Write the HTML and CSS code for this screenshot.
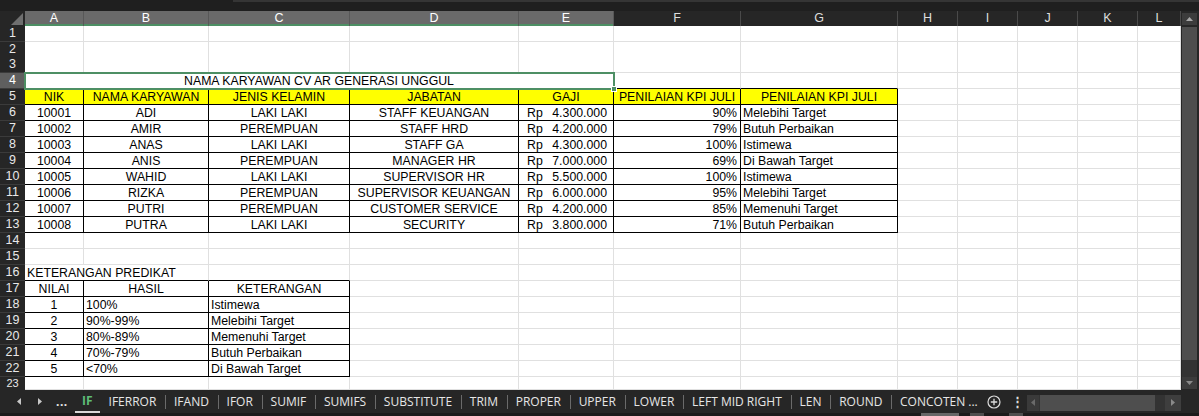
FILE: index.html
```html
<!DOCTYPE html>
<html>
<head>
<meta charset="utf-8">
<link rel="stylesheet" href="styles.css">
</head>
<body>
<div class="app">
  <div class="topstrip"><div class="fbar-edge"></div></div>
  <div class="main">
    <div class="sheet">
      <div class="r hdr">
        <div class="corner"><svg width="12" height="12" viewBox="0 0 12 12"><polygon points="12,0 12,12 0,12" fill="#6f6f6f"/></svg></div>
        <div class="ch sel">A</div><div class="ch sel">B</div><div class="ch sel">C</div><div class="ch sel">D</div><div class="ch sel">E</div>
        <div class="ch">F</div><div class="ch">G</div><div class="ch">H</div><div class="ch">I</div><div class="ch">J</div><div class="ch">K</div><div class="ch">L</div>
      </div>
      <div class="r h16"><div class="rh">1</div><div class="c"></div><div class="c"></div><div class="c"></div><div class="c"></div><div class="c"></div><div class="c"></div><div class="c"></div><div class="c"></div><div class="c"></div><div class="c"></div><div class="c"></div><div class="c"></div></div>
      <div class="r h15"><div class="rh">2</div><div class="c"></div><div class="c"></div><div class="c"></div><div class="c"></div><div class="c"></div><div class="c"></div><div class="c"></div><div class="c"></div><div class="c"></div><div class="c"></div><div class="c"></div><div class="c"></div></div>
      <div class="r h16"><div class="rh">3</div><div class="c"></div><div class="c"></div><div class="c"></div><div class="c"></div><div class="c"></div><div class="c"></div><div class="c"></div><div class="c"></div><div class="c"></div><div class="c"></div><div class="c"></div><div class="c"></div></div>
      <div class="r h16"><div class="rh sel">4</div><div class="c s5 ctr bb">NAMA KARYAWAN CV AR GENERASI UNGGUL</div><div class="c bb"></div><div class="c bb"></div><div class="c"></div><div class="c"></div><div class="c"></div><div class="c"></div><div class="c"></div></div>
      <div class="r h16"><div class="rh">5</div><div class="c y ctr br bb">NIK</div><div class="c y ctr br bb">NAMA KARYAWAN</div><div class="c y ctr br bb">JENIS KELAMIN</div><div class="c y ctr br bb">JABATAN</div><div class="c y ctr br bb">GAJI</div><div class="c y ctr br bb">PENILAIAN KPI JULI</div><div class="c y ctr br bb">PENILAIAN KPI JULI</div><div class="c"></div><div class="c"></div><div class="c"></div><div class="c"></div><div class="c"></div></div>

      <div class="r h16"><div class="rh">6</div><div class="c ctr br bb">10001</div><div class="c ctr br bb">ADI</div><div class="c ctr br bb">LAKI LAKI</div><div class="c ctr br bb">STAFF KEUANGAN</div><div class="c acc br bb"><span>Rp</span><span>4.300.000</span></div><div class="c rt br bb">90%</div><div class="c br bb">Melebihi Target</div><div class="c"></div><div class="c"></div><div class="c"></div><div class="c"></div><div class="c"></div></div>
      <div class="r h16"><div class="rh">7</div><div class="c ctr br bb">10002</div><div class="c ctr br bb">AMIR</div><div class="c ctr br bb">PEREMPUAN</div><div class="c ctr br bb">STAFF HRD</div><div class="c acc br bb"><span>Rp</span><span>4.200.000</span></div><div class="c rt br bb">79%</div><div class="c br bb">Butuh Perbaikan</div><div class="c"></div><div class="c"></div><div class="c"></div><div class="c"></div><div class="c"></div></div>
      <div class="r h16"><div class="rh">8</div><div class="c ctr br bb">10003</div><div class="c ctr br bb">ANAS</div><div class="c ctr br bb">LAKI LAKI</div><div class="c ctr br bb">STAFF GA</div><div class="c acc br bb"><span>Rp</span><span>4.300.000</span></div><div class="c rt br bb">100%</div><div class="c br bb">Istimewa</div><div class="c"></div><div class="c"></div><div class="c"></div><div class="c"></div><div class="c"></div></div>
      <div class="r h16"><div class="rh">9</div><div class="c ctr br bb">10004</div><div class="c ctr br bb">ANIS</div><div class="c ctr br bb">PEREMPUAN</div><div class="c ctr br bb">MANAGER HR</div><div class="c acc br bb"><span>Rp</span><span>7.000.000</span></div><div class="c rt br bb">69%</div><div class="c br bb">Di Bawah Target</div><div class="c"></div><div class="c"></div><div class="c"></div><div class="c"></div><div class="c"></div></div>
      <div class="r h16"><div class="rh">10</div><div class="c ctr br bb">10005</div><div class="c ctr br bb">WAHID</div><div class="c ctr br bb">LAKI LAKI</div><div class="c ctr br bb">SUPERVISOR HR</div><div class="c acc br bb"><span>Rp</span><span>5.500.000</span></div><div class="c rt br bb">100%</div><div class="c br bb">Istimewa</div><div class="c"></div><div class="c"></div><div class="c"></div><div class="c"></div><div class="c"></div></div>
      <div class="r h16"><div class="rh">11</div><div class="c ctr br bb">10006</div><div class="c ctr br bb">RIZKA</div><div class="c ctr br bb">PEREMPUAN</div><div class="c ctr br bb">SUPERVISOR KEUANGAN</div><div class="c acc br bb"><span>Rp</span><span>6.000.000</span></div><div class="c rt br bb">95%</div><div class="c br bb">Melebihi Target</div><div class="c"></div><div class="c"></div><div class="c"></div><div class="c"></div><div class="c"></div></div>
      <div class="r h16"><div class="rh">12</div><div class="c ctr br bb">10007</div><div class="c ctr br bb">PUTRI</div><div class="c ctr br bb">PEREMPUAN</div><div class="c ctr br bb">CUSTOMER SERVICE</div><div class="c acc br bb"><span>Rp</span><span>4.200.000</span></div><div class="c rt br bb">85%</div><div class="c br bb">Memenuhi Target</div><div class="c"></div><div class="c"></div><div class="c"></div><div class="c"></div><div class="c"></div></div>
      <div class="r h16"><div class="rh">13</div><div class="c ctr br bb">10008</div><div class="c ctr br bb">PUTRA</div><div class="c ctr br bb">LAKI LAKI</div><div class="c ctr br bb">SECURITY</div><div class="c acc br bb"><span>Rp</span><span>3.800.000</span></div><div class="c rt br bb">71%</div><div class="c br bb">Butuh Perbaikan</div><div class="c"></div><div class="c"></div><div class="c"></div><div class="c"></div><div class="c"></div></div>

      <div class="r h16"><div class="rh">14</div><div class="c"></div><div class="c"></div><div class="c"></div><div class="c"></div><div class="c"></div><div class="c"></div><div class="c"></div><div class="c"></div><div class="c"></div><div class="c"></div><div class="c"></div><div class="c"></div></div>
      <div class="r h16"><div class="rh">15</div><div class="c"></div><div class="c"></div><div class="c"></div><div class="c"></div><div class="c"></div><div class="c"></div><div class="c"></div><div class="c"></div><div class="c"></div><div class="c"></div><div class="c"></div><div class="c"></div></div>
      <div class="r h16"><div class="rh">16</div><div class="c s2 bb">KETERANGAN PREDIKAT</div><div class="c bb"></div><div class="c"></div><div class="c"></div><div class="c"></div><div class="c"></div><div class="c"></div><div class="c"></div><div class="c"></div><div class="c"></div><div class="c"></div></div>
      <div class="r h16"><div class="rh">17</div><div class="c ctr br bb">NILAI</div><div class="c ctr br bb">HASIL</div><div class="c ctr br bb">KETERANGAN</div><div class="c"></div><div class="c"></div><div class="c"></div><div class="c"></div><div class="c"></div><div class="c"></div><div class="c"></div><div class="c"></div><div class="c"></div></div>
      <div class="r h16"><div class="rh">18</div><div class="c ctr br bb">1</div><div class="c br bb">100%</div><div class="c br bb">Istimewa</div><div class="c"></div><div class="c"></div><div class="c"></div><div class="c"></div><div class="c"></div><div class="c"></div><div class="c"></div><div class="c"></div><div class="c"></div></div>
      <div class="r h16"><div class="rh">19</div><div class="c ctr br bb">2</div><div class="c br bb">90%-99%</div><div class="c br bb">Melebihi Target</div><div class="c"></div><div class="c"></div><div class="c"></div><div class="c"></div><div class="c"></div><div class="c"></div><div class="c"></div><div class="c"></div><div class="c"></div></div>
      <div class="r h16"><div class="rh">20</div><div class="c ctr br bb">3</div><div class="c br bb">80%-89%</div><div class="c br bb">Memenuhi Target</div><div class="c"></div><div class="c"></div><div class="c"></div><div class="c"></div><div class="c"></div><div class="c"></div><div class="c"></div><div class="c"></div><div class="c"></div></div>
      <div class="r h16"><div class="rh">21</div><div class="c ctr br bb">4</div><div class="c br bb">70%-79%</div><div class="c br bb">Butuh Perbaikan</div><div class="c"></div><div class="c"></div><div class="c"></div><div class="c"></div><div class="c"></div><div class="c"></div><div class="c"></div><div class="c"></div><div class="c"></div></div>
      <div class="r h16"><div class="rh">22</div><div class="c ctr br bb">5</div><div class="c br bb">&lt;70%</div><div class="c br bb">Di Bawah Target</div><div class="c"></div><div class="c"></div><div class="c"></div><div class="c"></div><div class="c"></div><div class="c"></div><div class="c"></div><div class="c"></div><div class="c"></div></div>
      <div class="r h13"><div class="rh last">23</div><div class="c"></div><div class="c"></div><div class="c"></div><div class="c"></div><div class="c"></div><div class="c"></div><div class="c"></div><div class="c"></div><div class="c"></div><div class="c"></div><div class="c"></div><div class="c"></div></div>

      <div class="selection"></div>
      <div class="fill-handle"></div>
    </div>
    <div class="vscroll">
      <div class="sbtn"><svg width="7" height="4" viewBox="0 0 7 4"><polygon points="0,4 7,4 3.5,0" fill="#a8a8a8"/></svg></div>
      <div class="vthumb"></div>
      <div class="vtrack"></div>
      <div class="sbtn"><svg width="7" height="4" viewBox="0 0 7 4"><polygon points="0,0 7,0 3.5,4" fill="#8a8a8a"/></svg></div>
    </div>
  </div>
  <div class="tabbar">
    <div class="nav">
      <svg class="arr" width="4" height="7" viewBox="0 0 4 7"><polygon points="4,0 4,7 0,3.5" fill="#c8c8c8"/></svg>
      <svg class="arr" width="4" height="7" viewBox="0 0 4 7"><polygon points="0,0 0,7 4,3.5" fill="#c8c8c8"/></svg>
      <span class="more">...</span>
    </div>
    <div class="tabs">
      <div class="tab active">IF</div>
      <div class="tab nosep">IFERROR</div>
      <div class="tab">IFAND</div>
      <div class="tab">IFOR</div>
      <div class="tab">SUMIF</div>
      <div class="tab">SUMIFS</div>
      <div class="tab">SUBSTITUTE</div>
      <div class="tab">TRIM</div>
      <div class="tab">PROPER</div>
      <div class="tab">UPPER</div>
      <div class="tab">LOWER</div>
      <div class="tab">LEFT MID RIGHT</div>
      <div class="tab">LEN</div>
      <div class="tab">ROUND</div>
      <div class="tab">CONCOTEN ...</div>
    </div>
    <div class="add"><svg width="14" height="14" viewBox="0 0 14 14"><circle cx="7" cy="7" r="6" fill="none" stroke="#dcdcdc" stroke-width="1.2"/><path d="M7 3.8v6.4M3.8 7h6.4" stroke="#dcdcdc" stroke-width="1.3"/></svg></div>
    <div class="dots">⋮</div>
    <div class="hscroll">
      <div class="hbtn"><svg width="4" height="7" viewBox="0 0 4 7"><polygon points="4,0 4,7 0,3.5" fill="#6a6a6a"/></svg></div>
      <div class="hthumb"></div>
      <div class="htrack"></div>
      <div class="hbtn right"><svg width="4" height="7" viewBox="0 0 4 7"><polygon points="0,0 0,7 4,3.5" fill="#8a8a8a"/></svg></div>
    </div>
  </div>
  <div class="status">
    <div class="sb-a"></div>
    <div class="sb-b"></div>
    <div class="sb-c"></div>
  </div>
</div>
</body>
</html>
```

FILE: styles.css
```css
* { box-sizing: border-box; }
html, body { margin: 0; padding: 0; }
body {
  width: 1199px;
  height: 416px;
  overflow: hidden;
  background: #1f1f1f;
  font-family: "Noto Sans", "Open Sans", sans-serif;
}
.app { display: flex; flex-direction: column; width: 1199px; height: 416px; }

.topstrip { height: 11px; display: flex; background: #1f1f1f; }
.fbar-edge { margin-left: 233px; flex: 1; height: 2px; background: #353535; }

.main { display: flex; height: 379px; }
.sheet { position: relative; width: 1181px; height: 379px; overflow: hidden; }

.r {
  display: grid;
  grid-template-columns: 25px 59px 125px 141px 169px 95px 127px 157px 60px 60px 60px 60px 43px;
}
.hdr { height: 15px; }
.h16 { height: 16px; }
.h15 { height: 15px; }
.h13 { height: 13px; overflow: hidden; }

.corner {
  background: #262626;
  display: flex;
  align-items: flex-end;
  justify-content: flex-end;
  padding: 0 2px 1px 0;
}
.ch {
  background: #262626;
  color: #dedede;
  font: 12.5px/15px "Liberation Sans", Arial, sans-serif;
  text-align: center;
  border-right: 1px solid #4a4a4a;
}
.ch.sel {
  background: #6a6a6a;
  color: #ffffff;
  border-right-color: #585858;
  box-shadow: inset 0 -2px 0 0 #4d8f64;
}

.rh {
  background: #262626;
  color: #e8e8e8;
  font: 12.5px/15px "Liberation Sans", Arial, sans-serif;
  text-align: center;
  border-bottom: 1px solid #3b3b3b;
}
.rh.sel { background: #5f5f5f; color: #ffffff; }
.rh.last { font-size: 11px; line-height: 13px; border-bottom: none; }

.c {
  background: #ffffff;
  border-right: 1px solid #e0e0e0;
  border-bottom: 1px solid #e0e0e0;
  font: 12.3px/15px "Liberation Sans", Arial, sans-serif;
  color: #000000;
  padding: 1px 2px 0 2px;
  white-space: nowrap;
  overflow: hidden;
}
.ctr { text-align: center; }
.rt { text-align: right; padding-right: 3px; }
.y { background: #ffff00; }
.br { border-right-color: #000000; }
.bb { border-bottom-color: #000000; }
.s5 { grid-column: span 5; }
.s2 { grid-column: span 2; }
.acc { display: flex; justify-content: space-between; padding-left: 8px; padding-right: 6px; }

.selection {
  position: absolute;
  left: 24px;
  top: 61px;
  width: 591px;
  height: 18px;
  border: 2px solid #4d8f64;
  pointer-events: none;
}
.fill-handle {
  position: absolute;
  left: 611px;
  top: 75px;
  width: 6px;
  height: 6px;
  background: #4d8f64;
  border: 1px solid #ffffff;
}

.vscroll {
  width: 18px;
  height: 379px;
  background: #262626;
  padding: 2px 2px 1px 1px;
  display: flex;
  flex-direction: column;
}
.sbtn {
  height: 12px;
  background: #3c3c3c;
  display: flex;
  align-items: center;
  justify-content: center;
}
.vthumb { margin-top: 2px; height: 333px; background: #4e4e4e; }
.vtrack { height: 17px; background: #333333; }

.tabbar {
  height: 23px;
  display: flex;
  align-items: center;
  background: #262626;
  color: #e6e6e6;
  font: 12px/23px "Open Sans", "Noto Sans", sans-serif;
}
.nav {
  width: 75px;
  display: flex;
  align-items: center;
  padding-left: 17px;
  flex: none;
}
.arr { margin-right: 17px; }
.arr + .arr { margin-right: 14px; }
.more { color: #e6e6e6; font-weight: 700; letter-spacing: 0.5px; }
.tabs {
  width: 910px;
  flex: none;
  display: flex;
  overflow: hidden;
  white-space: nowrap;
}
.tab {
  padding: 0 8.8px 0 8.9px;
  height: 23px;
  position: relative;
}
.tab.active {
  padding: 0 7px 0 7px;
  color: #5ebd77;
  font-weight: 700;
  border-bottom: 2px solid #d8d8d8;
  line-height: 22px;
}
.tab.nosep { padding-left: 9px; }
.tab:not(.active):not(.nosep)::after {
  content: "";
  position: absolute;
  left: 0;
  top: 5px;
  width: 1px;
  height: 14px;
  background: #6a6a6a;
}
.add { width: 19px; flex: none; display: flex; align-items: center; justify-content: flex-start; padding-left: 2px; }
.dots { width: 23px; flex: none; font-weight: 700; font-size: 13px; padding-left: 7px; color: #dcdcdc; }
.hscroll {
  width: 154px;
  height: 16px;
  flex: none;
  display: flex;
  background: #333333;
  margin-top: 2px;
}
.hbtn { width: 12px; display: flex; align-items: center; justify-content: center; background: #3a3a3a; }
.hthumb { width: 115px; margin-left: 1px; background: #4e4e4e; }
.htrack { flex: 1; background: #333333; }
.hbtn.right { width: 16px; background: #3e3e3e; }

.status {
  height: 3px;
  background: #1b1b1b;
  display: flex;
}
.sb-a { margin-left: 921px; width: 38px; background: #666666; }
.sb-b { margin-left: 11px; width: 14px; background: #4e4e4e; }
.sb-c { margin-left: 25px; width: 14px; background: #4e4e4e; }
```
